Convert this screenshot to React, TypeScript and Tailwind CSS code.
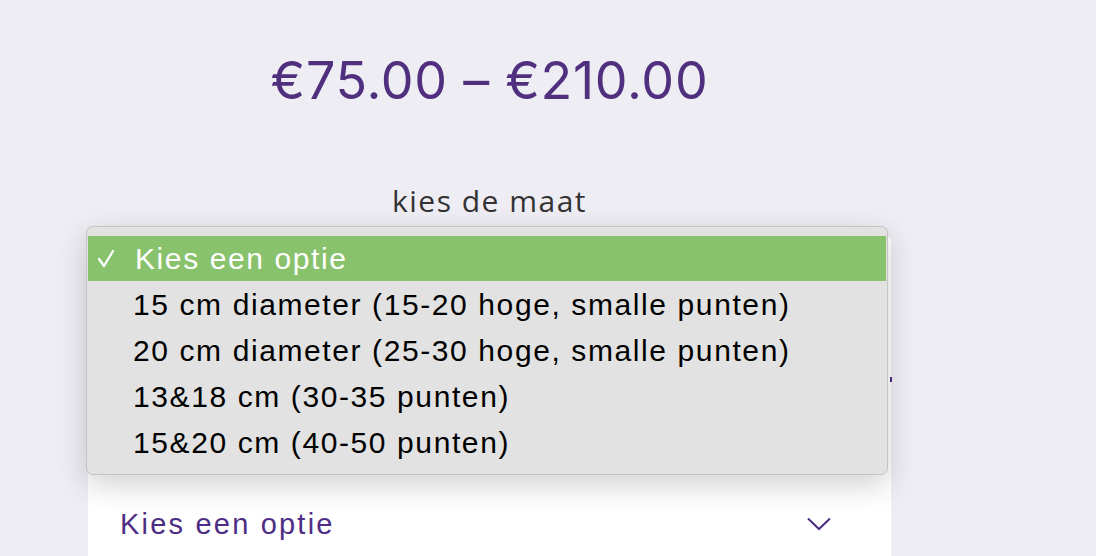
import React from 'react';

const options = [
  '15 cm diameter (15-20 hoge, smalle punten)',
  '20 cm diameter (25-30 hoge, smalle punten)',
  '13&18 cm (30-35 punten)',
  '15&20 cm (40-50 punten)',
];

const App: React.FC = () => {
  return (
    <div className="h-[556px] w-full overflow-hidden bg-[#efedf4]">
      <div className="ml-[88px] flex h-full w-[803px] flex-col items-center">
        <div className="mt-[56px] text-[52px] leading-[50px] tracking-[0.7px] text-[#50307e]" style={{ fontFamily: 'Inter, sans-serif' }}>
          €75.00 – €210.00
        </div>
        <div className="mt-[78px] text-[30px] leading-[34px] tracking-[1.5px] text-[#333]" style={{ fontFamily: '"Open Sans", sans-serif' }}>
          kies de maat
        </div>

        <div className="relative mt-[20px] flex w-full flex-1 items-end bg-white">
          <div className="absolute -right-[1px] top-[139px] h-[5px] w-[2px] bg-[#4b2a8c]" />
          <div className="mb-[10px] flex w-full items-center justify-between pl-[32px] pr-[60px]">
            <span className="text-[29px] tracking-[2.2px] text-[#4e2e85]" style={{ fontFamily: '"Liberation Sans", sans-serif' }}>
              Kies een optie
            </span>
            <svg width="24" height="14" viewBox="0 0 24 14" fill="none" stroke="#4e2e85" strokeWidth="2">
              <path d="M1 1.5 L12 12 L23 1.5" />
            </svg>
          </div>

          <div
            className="absolute -left-[2px] -top-[12px] w-[802px] rounded-[7px] border border-[#c4c4c4] bg-[#e1e2e1] py-[9px] shadow-[0_10px_30px_rgba(0,0,0,0.18)]"
            style={{ fontFamily: '"Liberation Sans", Arial, sans-serif' }}
          >
            <div className="mx-[1px] flex h-[45px] items-center bg-[#88c26c] pl-[10px] text-[30px] tracking-[1.6px] text-white">
              <svg width="37" height="20" viewBox="0 0 37 20" fill="none" stroke="white" strokeWidth="2.2" strokeLinecap="round" strokeLinejoin="round">
                <path d="M1 10 L6 17 L15 2" />
              </svg>
              <span>Kies een optie</span>
            </div>
            {options.map((o) => (
              <div key={o} className="flex h-[46px] items-center pl-[46px] text-[30px] tracking-[1.6px] text-black">
                {o}
              </div>
            ))}
          </div>
        </div>
      </div>
    </div>
  );
};

export default App;
